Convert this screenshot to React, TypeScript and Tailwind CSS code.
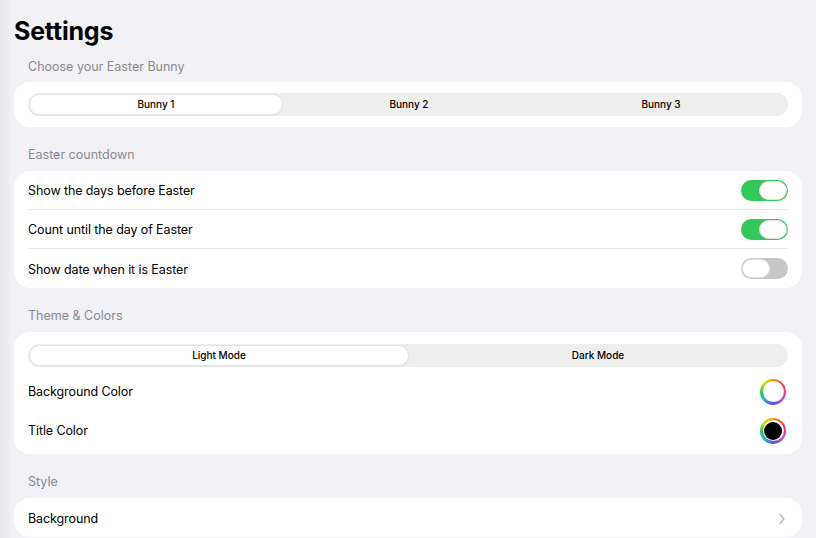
import React, { useState } from "react";

const ring =
  "bg-[conic-gradient(from_0deg,#ff9500,#ff3b30,#ff2d92,#af52de,#5856d6,#32ade6,#34c759,#d4e000,#ff9500)]";

function SectionLabel({ children }: { children: React.ReactNode }) {
  return (
    <div className="px-[14px] pt-[20px] pb-[8px] text-[12.5px] leading-[16px] text-[#8a8a8e]">
      {children}
    </div>
  );
}

function Segmented({
  options,
  value,
  onChange,
}: {
  options: string[];
  value: number;
  onChange: (i: number) => void;
}) {
  return (
    <div className="flex h-[23px] rounded-full bg-[#eeeeef] p-[1px]">
      {options.map((o, i) => (
        <button
          key={o}
          onClick={() => onChange(i)}
          className={
            i === value
              ? "flex-1 rounded-full border border-[#e4e4e6] bg-white text-[10px] font-medium text-black shadow-[0_1px_2px_rgba(0,0,0,0.06)]"
              : "flex-1 rounded-full text-[10px] font-medium text-black"
          }
        >
          {o}
        </button>
      ))}
    </div>
  );
}

function Toggle({ on, onClick }: { on: boolean; onClick: () => void }) {
  return (
    <button
      onClick={onClick}
      className={
        on
          ? "flex h-[21px] w-[47px] items-center justify-end rounded-full bg-[#34c759] p-[1px]"
          : "flex h-[21px] w-[47px] items-center justify-start rounded-full bg-[#c6c6c8] p-[1px]"
      }
    >
      <span className="h-[19px] w-[28px] rounded-full border border-[#e2e2e2] bg-white" />
    </button>
  );
}

function Row({
  label,
  children,
  divider,
}: {
  label: string;
  children?: React.ReactNode;
  divider?: boolean;
}) {
  return (
    <div className="px-[14px]">
      <div
        className={
          divider
            ? "flex h-[39px] items-center justify-between border-b border-[#e6e6e8]"
            : "flex h-[39px] items-center justify-between"
        }
      >
        <span className="mt-[3px] text-[12.5px] tracking-[-0.1px] text-black">{label}</span>
        {children}
      </div>
    </div>
  );
}

function ColorWell({ color }: { color: string | null }) {
  return (
    <div className={`mr-[2px] mt-[2px] flex h-[26px] w-[26px] items-center justify-center rounded-full ${ring}`}>
      <div className="flex h-[21px] w-[21px] items-center justify-center rounded-full bg-white">
        {color && <div className="h-[18px] w-[18px] rounded-full" style={{ background: color }} />}
      </div>
    </div>
  );
}

export default function App() {
  const [bunny, setBunny] = useState(0);
  const [mode, setMode] = useState(0);
  const [toggles, setToggles] = useState([true, true, false]);
  const flip = (i: number) => setToggles((t) => t.map((v, j) => (j === i ? !v : v)));

  const rows = ["Show the days before Easter", "Count until the day of Easter", "Show date when it is Easter"];

  return (
    <div className="min-h-[538px] w-full overflow-hidden bg-[linear-gradient(to_right,#e4e4e9,#f1f1f6_12px)] font-['Inter',sans-serif] px-[14px]">
      <h1 className="pt-[15px] text-[25px] font-bold leading-[32px] tracking-[-0.2px] text-black">
        Settings
      </h1>
      <div className="pt-[12px] pb-[7px] px-[14px] text-[12.5px] leading-[16px] text-[#8a8a8e]">
        Choose your Easter Bunny
      </div>
      <div className="rounded-[16px] bg-white px-[14px] py-[11px]">
        <Segmented options={["Bunny 1", "Bunny 2", "Bunny 3"]} value={bunny} onChange={setBunny} />
      </div>

      <SectionLabel>Easter countdown</SectionLabel>
      <div className="rounded-[16px] bg-white">
        {rows.map((r, i) => (
          <Row key={r} label={r} divider={i < rows.length - 1}>
            <Toggle on={toggles[i]} onClick={() => flip(i)} />
          </Row>
        ))}
      </div>

      <SectionLabel>Theme &amp; Colors</SectionLabel>
      <div className="rounded-[16px] bg-white pb-[5px]">
        <div className="px-[14px] pt-[12px] pb-[4px]">
          <Segmented options={["Light Mode", "Dark Mode"]} value={mode} onChange={setMode} />
        </div>
        <Row label="Background Color">
          <ColorWell color={null} />
        </Row>
        <Row label="Title Color">
          <ColorWell color="#000000" />
        </Row>
      </div>

      <SectionLabel>Style</SectionLabel>
      <div className="rounded-[16px] bg-white">
        <Row label="Background">
          <svg width="8" height="12" viewBox="0 0 8 12" fill="none" className="mr-[2px] mt-[2px]">
            <path d="M2 1.5L6 6L2 10.5" stroke="#b8b8bc" strokeWidth="1.3" strokeLinecap="round" strokeLinejoin="round" />
          </svg>
        </Row>
      </div>
    </div>
  );
}
